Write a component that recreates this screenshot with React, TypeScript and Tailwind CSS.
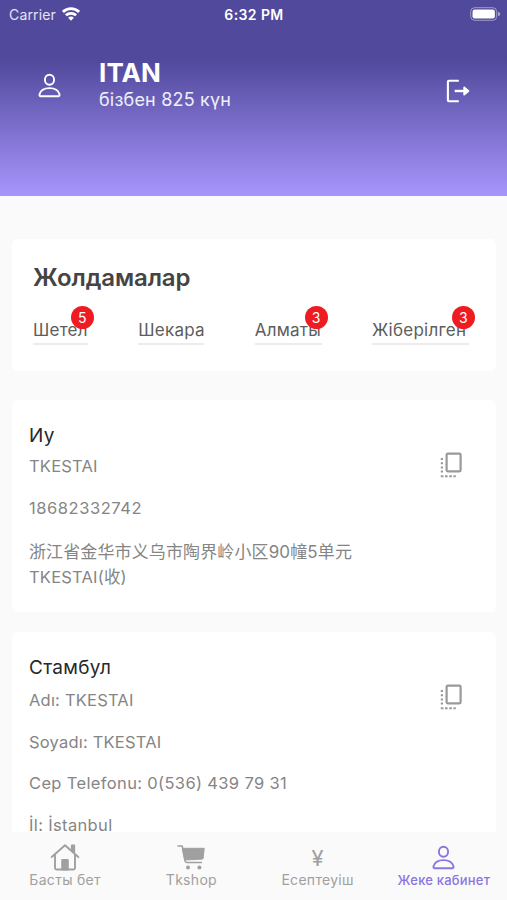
import type { ReactNode } from "react";

const PersonIcon = ({ className }: { className?: string }) => (
  <svg viewBox="0 0 24 26" fill="none" stroke="currentColor" strokeWidth="2" className={className}>
    <ellipse cx="12" cy="7" rx="4.8" ry="5.3" />
    <path d="M3 24.2h18c1.2 0 1.7-.9 1.4-2C21.3 18 17.2 15.7 12 15.7S2.7 18 1.6 22.2c-.3 1.1.2 2 1.4 2Z" />
  </svg>
);

const LogoutIcon = () => (
  <svg viewBox="0 0 24 24" fill="none" stroke="currentColor" strokeWidth="2.1" strokeLinejoin="round" className="h-6 w-6">
    <path d="M12.8 1.8H2.9a1 1 0 0 0-1 1v18.4a1 1 0 0 0 1 1h9.9" />
    <path d="M8.7 12h12" strokeWidth="2.4" />
    <path d="M18.2 8.4 22.4 12l-4.2 3.6Z" fill="currentColor" strokeWidth="1.8" />
  </svg>
);

const CopyIcon = () => (
  <svg viewBox="0 0 22 26" fill="none" stroke="currentColor" className="h-[26px] w-[22px]">
    <rect x="6.6" y="1.7" width="14" height="17.6" rx="1.2" strokeWidth="2.2" />
    <path d="M1.9 6v16.5" strokeWidth="2.2" strokeDasharray="2 2.2" />
    <path d="M.8 24.3h15" strokeWidth="2" strokeDasharray="2.6 1.6" />
  </svg>
);

const HomeIcon = () => (
  <svg viewBox="0 0 30 28" fill="none" stroke="currentColor" strokeWidth="1.9" strokeLinecap="round" strokeLinejoin="round" className="h-7 w-[30px]">
    <path d="M1.7 14 15 2.2 28.3 14" />
    <path d="M5 12v13c0 1 .5 1.5 1.5 1.5h17c1 0 1.5-.5 1.5-1.5V12" />
    <path d="M12.2 17h5.6v9.5h-5.6z" fill="currentColor" />
    <path d="M21.8 2.4h2.4v7l-2.4-2.2Z" fill="currentColor" />
  </svg>
);

const CartIcon = () => (
  <svg viewBox="0 0 30 26" fill="none" stroke="currentColor" strokeWidth="1.6" strokeLinecap="round" strokeLinejoin="round" className="h-[26px] w-[30px]">
    <path d="M2 2h4.2l3 15.400c.2.800.6 1.100 1.400 1.100h14.800" />
    <path d="M6.900 4.300h21.300l-1 9.700c-.1.700-.4 1-1.100 1.100L9 16Z" fill="currentColor" strokeWidth="1" />
    <circle cx="12" cy="23.600" r="2" fill="currentColor" stroke="none" />
    <circle cx="23.400" cy="23.600" r="2" fill="currentColor" stroke="none" />
  </svg>
);

const StatusBar = () => (
  <div className="grid h-7 grid-cols-3 items-center pl-[9px] pr-[6px]">
    <div className="flex items-center gap-[6px]">
      <span className="text-[14px] tracking-[0.15px] text-white/85">Carrier</span>
      <svg viewBox="0 0 18 14" fill="none" stroke="currentColor" strokeWidth="2.8" className="-mt-px h-[14px] w-[18px]">
        <path d="M.9 4.9a11.8 11.8 0 0 1 16.2 0" />
        <path d="M3.9 8.3a7.5 7.5 0 0 1 10.2 0" />
        <path d="m9 13.8-2.9-3a4.2 4.2 0 0 1 5.8 0Z" fill="currentColor" stroke="none" />
      </svg>
    </div>
    <span className="-ml-[2px] text-center text-[14px] font-semibold tracking-[0.4px]">6:32 PM</span>
    <svg viewBox="0 0 31 14" className="-mt-px h-[14px] w-[31px] justify-self-end">
      <rect x=".7" y=".7" width="26" height="12.6" rx="4" fill="none" stroke="#fff" strokeOpacity=".45" />
      <rect x="2.5" y="2.5" width="22.4" height="9" rx="2.3" fill="#fff" />
      <path d="M28 4.7c1.7.6 2.2 1.4 2.2 2.3S29.7 8.7 28 9.3Z" fill="#fff" fillOpacity=".5" />
    </svg>
  </div>
);

const statuses = [
  { label: "Шетел", count: 5, width: "w-[55px]", badge: "left-[38px]" },
  { label: "Шекара", count: 0, width: "w-[66px]", badge: "" },
  { label: "Алматы", count: 3, width: "w-[67px]", badge: "left-[50px]" },
  { label: "Жіберілген", count: 3, width: "w-[97px]", badge: "left-[80px]" },
];

const AddressCard = ({ title, children }: { title: string; children: ReactNode }) => (
  <section className="flex shrink-0 items-start justify-between rounded-md bg-white pl-[17px] pr-[34px] pt-6">
    <div className="text-[16.5px] leading-6 tracking-[0.2px] text-[#858585]">
      <h3 className="mb-[7px] text-[19px] leading-6 tracking-[0.3px] text-[#282828]">{title}</h3>
      {children}
    </div>
    <button className="mt-[28px] text-[#999]">
      <CopyIcon />
    </button>
  </section>
);

const NavItem = ({ icon, label, active }: { icon: ReactNode; label: string; active?: boolean }) => (
  <button className={active ? "flex flex-1 flex-col items-center text-[#8b75df]" : "flex flex-1 flex-col items-center text-[#a0a0a0]"}>
    <span className="flex h-[30px] items-center justify-center">{icon}</span>
    <span className={active ? "whitespace-nowrap text-[13px] font-medium leading-4 tracking-[0.2px]" : "whitespace-nowrap text-[14px] leading-4 tracking-[0.3px]"}>
      {label}
    </span>
  </button>
);

const App = () => (
  <div className="flex h-[900px] w-[507px] flex-col overflow-hidden bg-[#fafafa] font-['Inter','Noto_Sans_CJK_SC',sans-serif]">
    <header className="h-[196px] shrink-0 bg-[linear-gradient(#51499c_0,#51499c_60px,#a795fc_195px)] text-white">
      <StatusBar />
      <div className="flex items-start pl-[38px] pr-[37px] pt-[30px]">
        <PersonIcon className="mt-[15px] h-[25px] w-[23px]" />
        <div className="ml-[38px] flex-1">
          <h1 className="text-[26px] font-bold leading-[29px] tracking-[0.1px]">ITAN</h1>
          <p className="pt-px text-[18px] leading-6 tracking-[0.2px] text-white/90">бізбен 825 күн</p>
        </div>
        <button className="mt-[21px]">
          <LogoutIcon />
        </button>
      </div>
    </header>

    <main className="flex min-h-0 flex-1 flex-col overflow-hidden pl-3 pr-[11px] pt-[43px]">
      <section className="h-[132px] shrink-0 rounded-md bg-white pl-[21px] pr-[27px] pt-[23px]">
        <h2 className="text-[24px] font-semibold leading-8 tracking-[-0.1px] text-[#444]">Жолдамалар</h2>
        <div className="mt-[24px] flex justify-between text-[17px] leading-6 tracking-[0.25px] text-[#5d5d5d]">
          {statuses.map((s) => (
            <div key={s.label} className={`relative h-[27px] whitespace-nowrap border-b-2 border-[#ececec] ${s.width}`}>
              {s.label}
              {s.count > 0 && (
                <span className={`absolute -top-[12px] flex size-[23px] items-center justify-center rounded-full bg-[#ee1b20] text-[14px] text-white ${s.badge}`}>
                  {s.count}
                </span>
              )}
            </div>
          ))}
        </div>
      </section>

      <div className="mt-[29px] flex flex-col gap-5">
        <AddressCard title="Иу">
          <p className="-mt-px mb-[18px]">TKESTAI</p>
          <p className="mb-[20px] tracking-[0.55px]">18682332742</p>
          <p className="mb-[22px] leading-[25px]">
            <span className="text-[17px] tracking-[0.12px]">浙江省金华市义乌市陶界岭小区90幢5单元</span>
            <br />
            TKESTAI(收)
          </p>
        </AddressCard>
        <AddressCard title="Стамбул">
          <p className="mb-[17.5px] mt-[8px]">Adı: TKESTAI</p>
          <p className="mb-[17.5px]">Soyadı: TKESTAI</p>
          <p className="mb-[17.5px] tracking-[0.35px]">Cep Telefonu: 0(536) 439 79 31</p>
          <p className="mb-[17.5px] tracking-[0.35px]">İl: İstanbul</p>
        </AddressCard>
      </div>
    </main>

    <nav className="flex h-[68px] shrink-0 bg-[#fafafa] pl-0.5 pt-[10px]">
      <NavItem icon={<HomeIcon />} label="Басты бет" />
      <NavItem icon={<CartIcon />} label="Tkshop" />
      <NavItem icon={<span className="pt-0.5 text-[22px]">¥</span>} label="Есептеуіш" />
      <NavItem icon={<PersonIcon className="h-[25px] w-[23px]" />} label="Жеке кабинет" active />
    </nav>
  </div>
);

export default App;
